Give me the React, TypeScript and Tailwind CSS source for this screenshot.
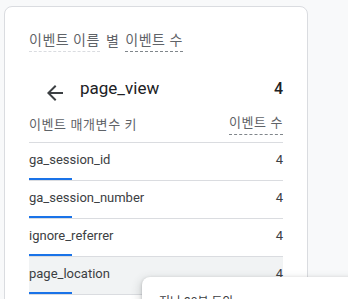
const rows = [
    { key: 'ga_session_id', count: 4 },
    { key: 'ga_session_number', count: 4 },
    { key: 'ignore_referrer', count: 4 },
    { key: 'page_location', count: 4, hover: true },
];

const ko = { fontFamily: 'Roboto, "Noto Sans CJK KR", sans-serif' };

export default function App() {
    return (
        <div className="relative h-[299px] w-[348px] overflow-hidden bg-[#f8f9fa]" style={ko}>
            <div className="ml-[4px] mt-[6px] h-[340px] w-[304px] rounded-lg border border-[#dadce0] bg-white px-6 pt-[23px]">
                <div className="flex items-center gap-[6px] text-[14px] leading-[20px] tracking-[0.5px] text-[#5f6368]">
                    <span className="border-b border-dashed border-[#dadce0] pb-[1px]">이벤트 이름</span>
                    <span>별</span>
                    <span className="border-b border-dashed border-[#80868b] pb-[1px]">이벤트 수</span>
                </div>

                <div className="mt-[26px] flex h-[30px] items-center">
                    <svg className="ml-[14px] h-6 w-6 text-[#3c4043]" viewBox="0 0 24 24" fill="currentColor">
                        <path d="M20 11H7.83l5.59-5.59L12 4l-8 8 8 8 1.41-1.41L7.83 13H20v-2z" />
                    </svg>
                    <span className="ml-[13px] -mt-[8px] text-[17px] text-[#202124]">page_view</span>
                    <span className="ml-auto -mt-[8px] text-[16px] font-medium text-[#202124]">4</span>
                </div>

                <div className="mt-[5px] flex items-end justify-between pb-[7px] text-[13px] tracking-[0.6px] text-[#5f6368]">
                    <span>이벤트 매개변수 키</span>
                    <span className="border-b border-dashed border-[#80868b] pb-[1px]">이벤트 수</span>
                </div>

                <div className="border-t border-[#dadce0]">
                    {rows.map((r) => (
                        <div
                            key={r.key}
                            className={`flex h-[38px] flex-col border-b border-[#dadce0] ${r.hover ? 'bg-[#f1f3f4]' : ''}`}
                        >
                            <div className="flex flex-1 items-center justify-between text-[13px] text-[#3c4043]">
                                <span>{r.key}</span>
                                <span>{r.count}</span>
                            </div>
                            <div className="h-[2px] w-[43px] bg-[#1a73e8]" />
                        </div>
                    ))}
                </div>
            </div>

            <div className="absolute left-[142px] top-[277px] h-[60px] w-[260px] rounded-lg bg-white pl-[17px] pt-[16px] text-[12px] text-[#3c4043] shadow-[0_1px_3px_rgba(60,64,67,0.3),0_4px_8px_3px_rgba(60,64,67,0.15)]">
                지난 30분 동안
            </div>
        </div>
    );
}
